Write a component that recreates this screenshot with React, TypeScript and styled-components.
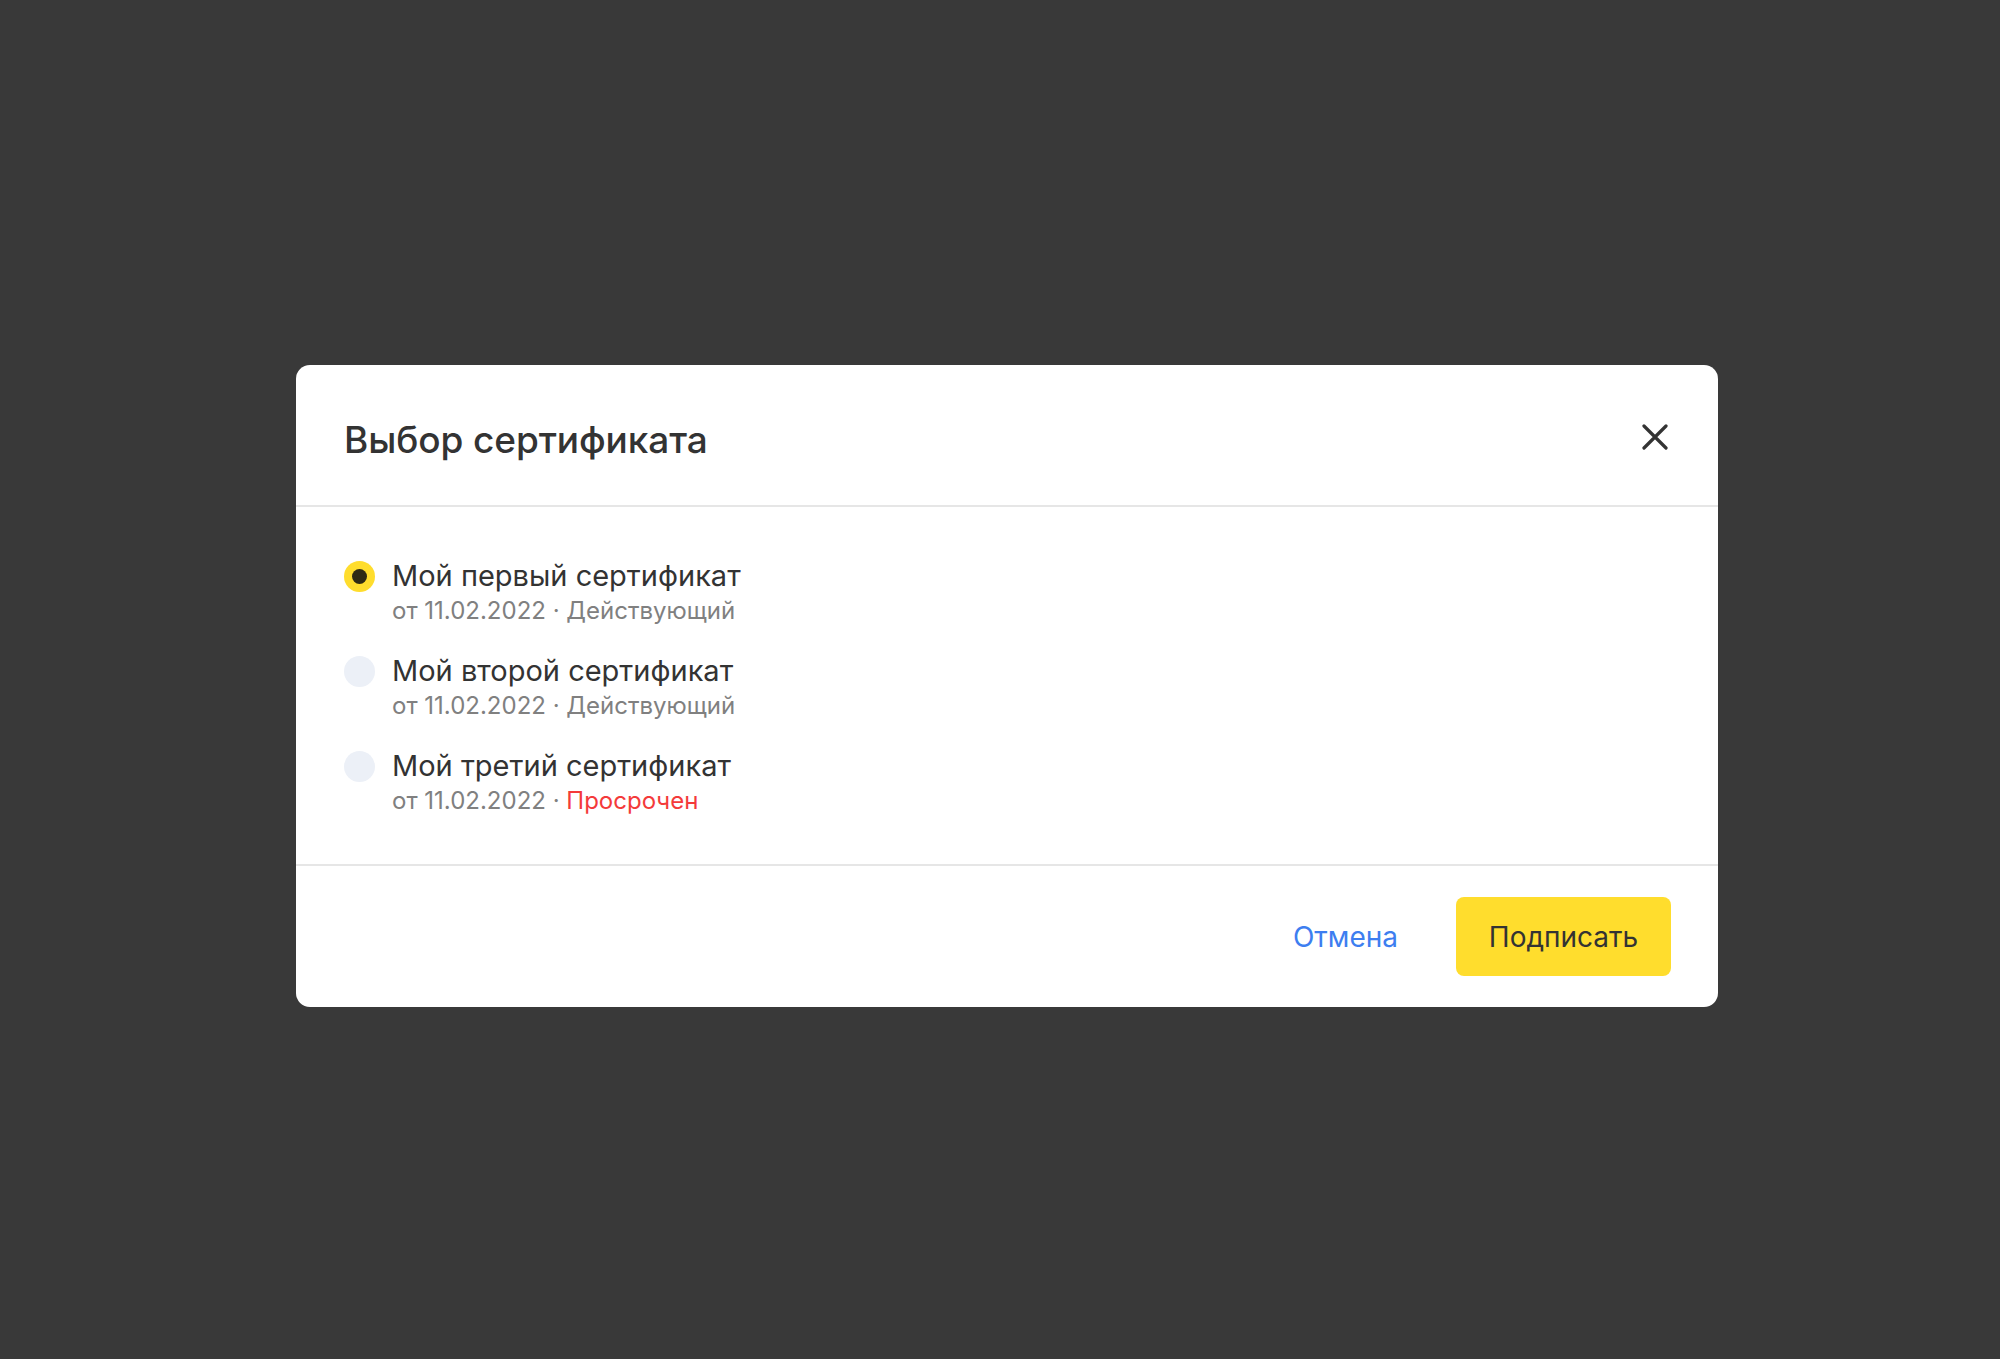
import React, {useState} from 'react';
import styled, {createGlobalStyle} from 'styled-components';

const GlobalStyle = createGlobalStyle`
  html, body {
    margin: 0;
    padding: 0;
    background: #393939;
  }
  body {
    font-family: Inter, "Liberation Sans", Arial, sans-serif;
    -webkit-font-smoothing: antialiased;
  }
`;

const Page = styled.div`
  width: 2000px;
  height: 1359px;
  display: flex;
  align-items: flex-start;
  justify-content: center;
  padding: 365px 0 0 14px;
  box-sizing: border-box;
`;

const Modal = styled.div`
  width: 1422px;
  background: #fff;
  border-radius: 14px;
  display: flex;
  flex-direction: column;
  overflow: hidden;
`;

const Header = styled.div`
  height: 140px;
  display: flex;
  align-items: center;
  justify-content: space-between;
  padding: 0 49px 0 48px;
  border-bottom: 2px solid #e6e6e6;
`;

const Title = styled.h2`
  margin: 0;
  font-size: 37px;
  font-weight: 500;
  color: #333;
  padding-top: 9px;
  letter-spacing: -0.1px;
`;

const CloseButton = styled.button`
  width: 28px;
  height: 28px;
  padding: 0;
  border: none;
  background: none;
  cursor: pointer;
  display: flex;
  align-items: center;
  justify-content: center;
  margin-top: 4px;
`;

const Body = styled.div`
  padding: 51px 50px 46px 48px;
  display: flex;
  flex-direction: column;
  gap: 25px;
  border-bottom: 2px solid #e6e6e6;
`;

const Item = styled.label`
  display: flex;
  gap: 17px;
  cursor: pointer;
`;

const Radio = styled.span<{ $checked: boolean }>`
  width: 31px;
  height: 31px;
  flex: none;
  margin-top: 3px;
  border-radius: 50%;
  background: ${p => (p.$checked ? '#ffdd2d' : '#ecf0f7')};
  display: flex;
  align-items: center;
  justify-content: center;

  &::after {
    content: '';
    width: 15px;
    height: 15px;
    border-radius: 50%;
    background: #2e2a14;
    display: ${p => (p.$checked ? 'block' : 'none')};
  }
`;

const Texts = styled.div`
  display: flex;
  flex-direction: column;
`;

const ItemTitle = styled.div`
  font-size: 29px;
  line-height: 36px;
  color: #333;
`;

const ItemMeta = styled.div`
  font-size: 24px;
  line-height: 34px;
  color: #808080;
`;

const Status = styled.span<{ $expired?: boolean }>`
  color: ${p => (p.$expired ? '#f43a3a' : '#808080')};
`;

const Footer = styled.div`
  height: 141px;
  display: flex;
  align-items: center;
  justify-content: flex-end;
  gap: 58px;
  padding: 0 47px;
`;

const LinkButton = styled.button`
  border: none;
  background: none;
  padding: 0;
  font-family: inherit;
  font-size: 28px;
  color: #3d7ef0;
  cursor: pointer;
`;

const PrimaryButton = styled.button`
  height: 79px;
  width: 215px;
  border: none;
  border-radius: 8px;
  background: #ffdd2d;
  font-family: inherit;
  font-size: 28px;
  color: #333;
  cursor: pointer;
`;

const certs = [
    {name: 'Мой первый сертификат', date: '11.02.2022', expired: false},
    {name: 'Мой второй сертификат', date: '11.02.2022', expired: false},
    {name: 'Мой третий сертификат', date: '11.02.2022', expired: true},
];

function App() {
    const [selected, setSelected] = useState(0);

    return (
        <Page>
            <GlobalStyle/>
            <Modal>
                <Header>
                    <Title>Выбор сертификата</Title>
                    <CloseButton aria-label="Закрыть">
                        <svg width="26" height="26" viewBox="0 0 26 26">
                            <path d="M2 2L24 24M24 2L2 24" stroke="#333" strokeWidth="3.2" strokeLinecap="round"/>
                        </svg>
                    </CloseButton>
                </Header>

                <Body>
                    {certs.map((c, i) => (
                        <Item key={c.name} onClick={() => setSelected(i)}>
                            <Radio $checked={selected === i}/>
                            <Texts>
                                <ItemTitle>{c.name}</ItemTitle>
                                <ItemMeta>
                                    от {c.date} · <Status $expired={c.expired}>
                                    {c.expired ? 'Просрочен' : 'Действующий'}
                                </Status>
                                </ItemMeta>
                            </Texts>
                        </Item>
                    ))}
                </Body>

                <Footer>
                    <LinkButton>Отмена</LinkButton>
                    <PrimaryButton>Подписать</PrimaryButton>
                </Footer>
            </Modal>
        </Page>
    );
}

export default App;
